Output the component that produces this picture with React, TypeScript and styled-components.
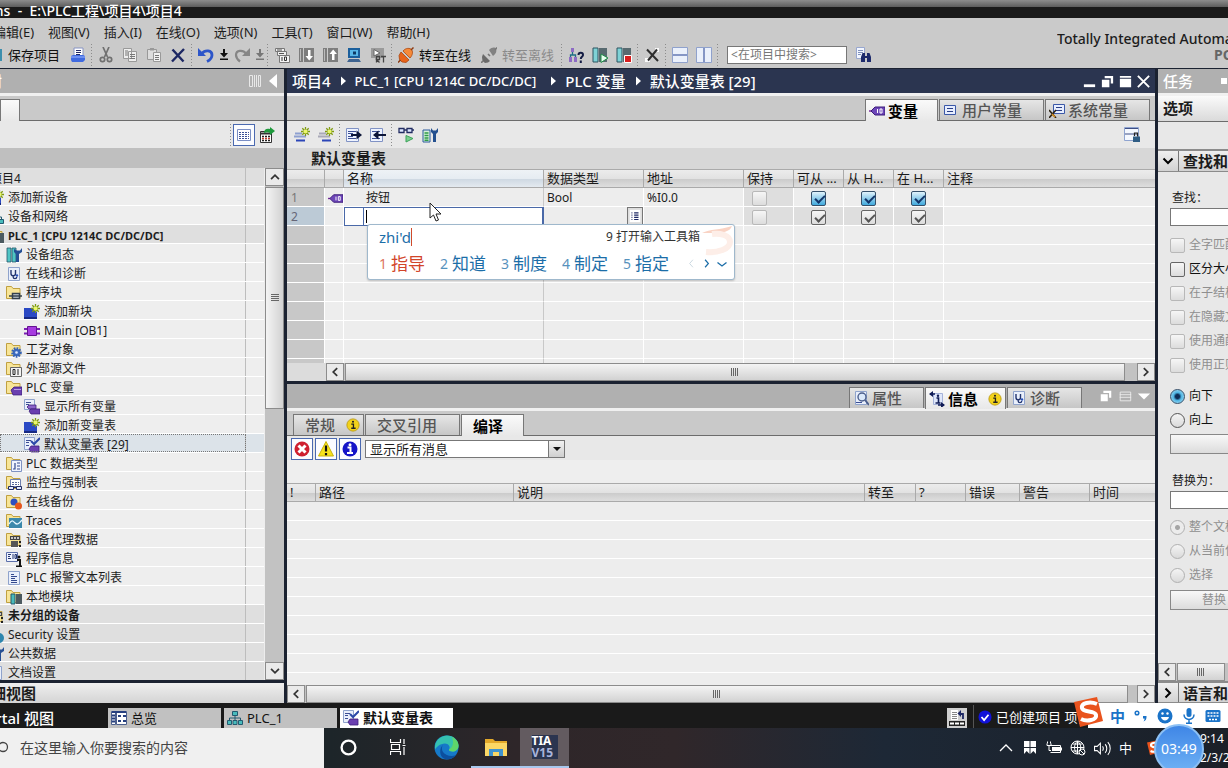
import React from 'react';
import styled, { createGlobalStyle, css } from 'styled-components';

const Global = createGlobalStyle`
  * { box-sizing: border-box; }
  html, body, #root { height: 100%; }
  body {
    margin: 0;
    overflow: hidden;
    background: #1a1a1a;
    color: #1c1c1c;
    font: 12px/18px "Noto Sans", "Noto Sans CJK SC", sans-serif;
  }
  button, input, select { font: inherit; color: inherit; margin: 0; padding: 0; border-radius: 0; }
  ul { list-style: none; margin: 0; padding: 0; }
  p, h1, h2, h3 { margin: 0; font-size: inherit; font-weight: inherit; }
`;

/* ---------- icons ---------- */

const Folder = () => (
  <path d="M.5 13.500V1.500h5l1.500 2h7v10z" fill="#f8e597" stroke="#c0a040" />
);
const Sheet = () => (
  <path d="M2.500 1.500h11v13h-11z" fill="#e9effb" stroke="#8fa3cc" />
);
const Spark = () => (
  <>
    <path d="M11.500 0v9M7 4.500h9M8.300 1.300l6.400 6.400M14.700 1.300L8.300 7.700" stroke="#7f9a12" strokeWidth="1.300" />
    <circle cx="11.500" cy="4.500" r="2" fill="#eaf76a" />
  </>
);
const Tag = () => (
  <>
    <path d="M5 10l3-3h8v8H7z" fill="#6a3fb0" stroke="#3d1f7c" strokeWidth=".8" />
    <path d="M8 9.500h7" stroke="#b9a0e6" />
  </>
);

const icons: Record<string, React.ReactNode> = {
  save: <path d="M1 2h14v12H1z" fill="#3d8fae" />,
  print: (
    <>
      <path d="M4 1h9v8H4z" fill="#fff" stroke="#8794c4" />
      <path d="M6 3.500h5M6 5.500h5M6 7.500h4" stroke="#222a66" />
      <path d="M1 9l2-1h10l2 1v4l-2 2H2l-1-2z" fill="#3f6ae0" />
      <path d="M1 10h14" stroke="#9db5ff" />
    </>
  ),
  cut: (
    <g fill="none" stroke="#707070" strokeWidth="1.700">
      <path d="M5 0l4.500 10M11 0L6.500 10" />
      <circle cx="4.500" cy="12.500" r="2.200" />
      <circle cx="11.500" cy="12.500" r="2.200" />
    </g>
  ),
  copy: (
    <>
      <path d="M1.500 1.500h8v10h-8zM6.500 4.500h8v10h-8z" fill="#eee" stroke="#999" />
      <path d="M3 4h3M3 6h3M3 8h3M8 7.500h5M8 9.500h5M8 11.500h5" stroke="#777" />
    </>
  ),
  paste: (
    <>
      <path d="M1.500 2.500h9v10h-9z" fill="#ddd" stroke="#999" />
      <path d="M4 1h4v2.500H4z" fill="#999" />
      <path d="M7.500 5.500h7v9h-7z" fill="#f2f2f2" stroke="#999" />
      <path d="M9 8.500h4M9 10.500h4M9 12.500h4" stroke="#777" />
    </>
  ),
  remove: <path d="M2.500 2.500l11 12M14 2L2 14.500" stroke="#1c2763" strokeWidth="2.400" />,
  undo: (
    <>
      <path d="M0 1v8h8z" fill="#2c55c9" />
      <path d="M4 6.500c3-4 10-3.500 10 1.500 0 3-2 5-5 6.500" fill="none" stroke="#2c55c9" strokeWidth="2.800" />
    </>
  ),
  redo: (
    <>
      <path d="M16 1v8H8z" fill="#868686" />
      <path d="M12 6.500C9 2.500 2 3 2 8c0 3 2 5 4 6.500" fill="none" stroke="#868686" strokeWidth="2.200" />
    </>
  ),
  compile: (
    <>
      <path d="M1.500 1.500h9v3h-9zM3.500 4.500h9v4h-9z" fill="#eee" stroke="#777" />
      <path d="M3 3h5M5 6.500h5" stroke="#555" />
      <path d="M5.500 8.500h10v7h-10z" fill="#f4f4f4" stroke="#777" />
      <path d="M8 10v4M10.500 10h2v3.500h-2z" fill="none" stroke="#333" />
    </>
  ),
  download: (
    <>
      <path d="M1 1h4v14H1zM6 1h10v14H6z" fill="#7d7d7d" />
      <path d="M2.500 2v12" stroke="#bbb" />
      <path d="M10 3v6H7.500l3.700 4.500L15 9h-2.500V3z" fill="#fff" />
    </>
  ),
  upload: (
    <>
      <path d="M1 1h4v14H1zM6 1h10v14H6z" fill="#7d7d7d" />
      <path d="M2.500 2v12" stroke="#bbb" />
      <path d="M10 13V7H7.500l3.700-4.500L15 7h-2.500v6z" fill="#fff" />
    </>
  ),
  simulate: (
    <>
      <path d="M2 1h12v10H2z" fill="#1b5f9c" />
      <path d="M4 3h8v6H4z" fill="#58b7e8" />
      <path d="M7 4.500h3v3H7z" fill="#0e3b66" />
      <path d="M3 12h10l2 3H1z" fill="#3e6390" />
    </>
  ),
  runtime: (
    <>
      <path d="M1 1h13v10H1z" fill="#9a9a9a" />
      <path d="M4 2.500l6 3.500L4 9z" fill="#fff" stroke="#666" />
      <path d="M6.500 15.500v-6h3v3h-3l3 3M11 9.500h5M13.500 9.500v6" fill="none" stroke="#444" strokeWidth="1.300" />
    </>
  ),
  online: (
    <>
      <path d="M3 5l8 8-3 2.500-4-.5-2.500-2.500L1 8.500z" fill="#e8641b" stroke="#a33c06" strokeWidth=".7" />
      <path d="M5 4c3-3.500 7-3 8.500-1.500S15 8 12 11z" fill="#f58a3a" stroke="#a33c06" strokeWidth=".7" />
      <path d="M2.500 13L0 15.500M13 3l2.500-2.500" stroke="#8d3b12" strokeWidth="1.500" />
    </>
  ),
  offline: (
    <>
      <path d="M2 7l7 7-2 1.500-3 .5-2.500-2L1 10z" fill="#6a6a6a" />
      <path d="M8 3c3-3 6-3 7-1s0 5-3 7z" fill="#828282" />
      <path d="M2 14L0 16M14 3l2-2.500M7 7l2 2" stroke="#777" strokeWidth="1.600" />
    </>
  ),
  accessible: (
    <>
      <path d="M3 1h3v4H3zM1 10h3v5H1zM6 10h3v5H6z" fill="#8d6bc4" />
      <path d="M4.500 5v3M2.500 10V8h5v2" fill="none" stroke="#1f6f86" strokeWidth="1.300" />
      <path d="M10.500 8c0-3 4.500-3 4.500 0 0 2-2.200 1.700-2.200 4M12.800 13.500V16" fill="none" stroke="#141c44" strokeWidth="2" />
    </>
  ),
  startCpu: (
    <>
      <path d="M1 1h5v14H1z" fill="#7fd2d6" stroke="#2c5560" />
      <path d="M7 1h8v14H7z" fill="#586a70" />
      <path d="M9 7l7 4-7 4.500z" fill="#e8fff0" stroke="#1f8c46" />
    </>
  ),
  stopCpu: (
    <>
      <path d="M1 1h5v14H1z" fill="#7fd2d6" stroke="#2c5560" />
      <path d="M7 1h8v14H7z" fill="#586a70" />
      <path d="M8.500 8.500h7v7h-7z" fill="#d81e1e" stroke="#fff" />
    </>
  ),
  crossRef: (
    <>
      <path d="M1 11h5v4H1zM11 1h4v4h-4z" fill="#fafafa" />
      <path d="M3 2.500l11 11.500M13 2.500L4 13.500" stroke="#2e2e2e" strokeWidth="2" />
    </>
  ),
  splitH: (
    <>
      <path d="M.5.500h15v15H.5z" fill="#eaf0fb" stroke="#8fa1cc" />
      <path d="M1 8h14" stroke="#6378b3" strokeWidth="1.500" />
    </>
  ),
  splitV: (
    <>
      <path d="M.5.500h15v15H.5z" fill="#eaf0fb" stroke="#8fa1cc" />
      <path d="M8 1v14" stroke="#6378b3" strokeWidth="1.500" />
    </>
  ),
  find: (
    <>
      <path d="M.5.500h8v11h-8z" fill="#f2f6ff" stroke="#98a7cf" />
      <path d="M2 3.500h5M2 5.500h5M2 7.500h3" stroke="#8090bb" />
      <path d="M5 15v-5l1.500-4H9v3h2V6h2.500L15 10v5h-4v-4H9v4z" fill="#1d2a6b" />
    </>
  ),
  table: (
    <>
      <path d="M1.500 2.500h13v11h-13z" fill="#fff" stroke="#7a8ec4" />
      <path d="M3 5.500h10M3 7.500h10M3 9.500h10M3 11.500h10" stroke="#3d5296" strokeDasharray="2 1" />
    </>
  ),
  exportList: (
    <>
      <path d="M1.500 4.500h11v11h-11z" fill="#fff" stroke="#333" />
      <path d="M2 6.500h10" stroke="#333" strokeWidth="2" />
      <path d="M3 9.500h8M3 13.500h8" stroke="#222" strokeDasharray="2 1" strokeWidth="1.500" />
      <path d="M3 11.500h8" stroke="#c0392b" strokeDasharray="2 1" strokeWidth="1.500" />
      <path d="M5 6c0-4 3-5 6-4V0l5 4-5 4V6c-2-1-3-1-6 0z" fill="#1f9a3c" />
    </>
  ),
  addRow: (
    <>
      <path d="M1 6.500h7M0 9.500h12" stroke="#8ea0d0" strokeWidth="2" />
      <path d="M2 13.500h9" stroke="#2c46b8" strokeWidth="2" />
      <Spark />
    </>
  ),
  insertRow: (
    <>
      <path d="M1 6.500h7M0 9.500h12" stroke="#a9a9b8" strokeWidth="2" />
      <path d="M4 13.500h9" stroke="#2c46b8" strokeWidth="2" />
      <Spark />
    </>
  ),
  exportPage: (
    <>
      <path d="M.5 1.500h12v13H.5z" fill="#eef3ff" stroke="#8092c4" />
      <path d="M2 4.500h8M2 6.500h5M2 9.500h5M2 11.500h8" stroke="#3c4f94" />
      <path d="M5 8h6" stroke="#0c1538" strokeWidth="2" />
      <path d="M10.500 3.500L16 8l-5.500 4.500z" fill="#0c1538" />
    </>
  ),
  importPage: (
    <>
      <path d="M.5 1.500h12v13H.5z" fill="#eef3ff" stroke="#8092c4" />
      <path d="M2 4.500h8M2 11.500h8" stroke="#3c4f94" />
      <path d="M8 8h8" stroke="#0c1538" strokeWidth="2" />
      <path d="M8.500 3.500L3 8l5.500 4.500z" fill="#0c1538" />
    </>
  ),
  monitor: (
    <>
      <path d="M1 1.500h5v4H1zM9 1.500h5v4H9zM6 3h3M14 3h2" fill="#dfe8ff" stroke="#232d62" strokeWidth="1.300" />
      <path d="M8 8.500l7 3-7 3.500z" fill="#7bd08f" stroke="#3da35a" />
    </>
  ),
  wrench: (
    <>
      <path d="M1 3h7v12H1z" fill="#d7f0da" stroke="#2c5a9e" />
      <path d="M2.500 6h4M2.500 8.500h4M2.500 11h4M2.500 13.200h4" stroke="#2f9b48" strokeWidth="1.400" />
      <path d="M9 1v4l2 2v8h3V7l2-2V1l-2 2.500h-3z" fill="#24508f" />
    </>
  ),
  layout: (
    <>
      <path d="M.5.500h14v13H.5z" fill="#f4f8ff" stroke="#8fa4d0" />
      <path d="M1 1.500h13M1 7h13" stroke="#3f4f85" />
      <path d="M9 9.500h7V15H9z" fill="#2f5d84" />
      <path d="M10.500 9V6h3v3.500" fill="none" stroke="#222" strokeWidth="1.200" />
    </>
  ),
  tag: (
    <>
      <path d="M0 8h3" stroke="#7a2d9c" strokeWidth="1.500" />
      <path d="M2 8l4-4h10v8H6z" fill="#6d46b8" stroke="#3c1d7a" />
      <path d="M8.500 6v4M11 6h2v4h-2z" fill="none" stroke="#fff" />
    </>
  ),
  constant: (
    <>
      <path d="M1.500 3.500h11v9h-11z" fill="#e7eeff" stroke="#3b58a8" />
      <path d="M4 6.500h6M4 9.500h6" stroke="#2b3f86" />
    </>
  ),
  sysConstant: (
    <>
      <path d="M4.500 2.500h11v9h-11z" fill="#e7eeff" stroke="#3b58a8" />
      <path d="M7 5.500h6M7 8.500h6" stroke="#2b3f86" />
      <path d="M0 8l7 8M7 8l-7 8" stroke="#2a2013" strokeWidth="1.500" />
      <path d="M3 12l3 3" stroke="#d98e1c" strokeWidth="1.500" />
    </>
  ),
  device: (
    <>
      <path d="M1 1h4v14H1zM6 1h4v14H6z" fill="#4fc4c4" stroke="#24566a" strokeWidth=".8" />
      <path d="M8 2v3l2 2v8h3V7l3-2V1l-2 2.500h-3z" fill="#254f94" />
    </>
  ),
  diagnose: (
    <>
      <Sheet />
      <path d="M5 4v3.500c0 3 4.500 3 4.500 0V4M7.200 9.500V11c0 2.200 3.500 2.200 3.500 0" fill="none" stroke="#23356f" strokeWidth="1.400" />
      <circle cx="11" cy="9.500" r="1.200" fill="#2950b8" />
    </>
  ),
  blocks: (
    <>
      <Folder />
      <path d="M3 11h13M6.500 8.500h7v5h-7z" fill="#cdd6de" stroke="#34414e" strokeWidth="1.500" />
    </>
  ),
  addBlock: (
    <>
      <path d="M0 4h9l4 4v7H0z" fill="#2a49c4" />
      <path d="M0 14h13" stroke="#172a82" strokeWidth="2" />
      <Spark />
    </>
  ),
  ob: (
    <>
      <path d="M0 6h16M0 10.500h16" stroke="#7a1fb3" strokeWidth="2" />
      <path d="M3.500 3.500h9v9h-9z" fill="#a73be0" stroke="#63138f" />
    </>
  ),
  objects: (
    <>
      <Folder />
      <circle cx="10.500" cy="10.500" r="3.800" fill="#3f6fc4" stroke="#3562b4" strokeDasharray="1.500 1" strokeWidth="3" />
      <circle cx="10.500" cy="10.500" r="1.300" fill="#dfe9ff" />
    </>
  ),
  external: (
    <>
      <Folder />
      <path d="M4.500 6.500h11v9h-11z" fill="#f4f4f4" stroke="#666" />
      <path d="M7 8.500h2v5H7zM12 8v6" fill="none" stroke="#222" />
    </>
  ),
  tags: (
    <>
      <Folder />
      <Tag />
    </>
  ),
  allTags: (
    <>
      <path d="M.5.500h10v10H.5z" fill="#e9effb" stroke="#8fa3cc" />
      <path d="M2 3.500h5M2 5.500h3" stroke="#3c4f94" />
      <path d="M3 8l2-2h7v4H5z" fill="#8a63c9" stroke="#3d1f7c" strokeWidth=".8" />
      <path d="M5 12l2-2h9v5H7z" fill="#6a3fb0" stroke="#3d1f7c" strokeWidth=".8" />
    </>
  ),
  tagTable: (
    <>
      <path d="M.5.500h10v12H.5z" fill="#e9effb" stroke="#8fa3cc" />
      <path d="M2 3.500h5M2 5.500h3M2 8.500h3" stroke="#3c4f94" />
      <path d="M7 4l3 3 6-6" fill="none" stroke="#2c49a8" strokeWidth="2" />
      <path d="M5 12l2-3h8v6H7z" fill="#6a3fb0" stroke="#3d1f7c" strokeWidth=".8" />
    </>
  ),
  types: (
    <>
      <Folder />
      <path d="M5.500 4.500h10v11h-10z" fill="#f0f4ff" stroke="#7e92c2" />
      <path d="M9 7v6H7M11 7h3M11 10h3M11 13h3" fill="none" stroke="#33488e" strokeWidth="1.200" />
    </>
  ),
  watch: (
    <>
      <Folder />
      <path d="M4.500 4.500h10v7h-10z" fill="#fff" stroke="#6f80b0" />
      <path d="M6 7.500h7M6 9.500h7" stroke="#5a6a9c" strokeDasharray="2 1" />
      <path d="M2.500 11.500h5v3h-5zM10.500 11.500h5v3h-5zM7 12.500h4" fill="#dfe8ff" stroke="#232d62" />
    </>
  ),
  backup: (
    <>
      <Folder />
      <circle cx="8" cy="8" r="3.500" fill="#2d50c0" />
      <circle cx="12.500" cy="12" r="3.500" fill="#e6571d" />
    </>
  ),
  traces: (
    <>
      <Folder />
      <path d="M3 5h13v10H3z" fill="#3b88ab" />
      <path d="M3 11c3-5 4-3 6-1s4 1 7-3" fill="none" stroke="#e6f7ff" strokeWidth="1.300" />
    </>
  ),
  proxy: (
    <>
      <Folder />
      <path d="M4 4h10v4H4z" fill="#444" />
      <path d="M5 6h8" stroke="#f2f2f2" strokeDasharray="2 1" strokeWidth="1.500" />
      <path d="M5 9h7v6H5z" fill="#565656" />
      <path d="M14 9v2M14 13v2" stroke="#222" strokeWidth="2" />
    </>
  ),
  info: (
    <>
      <path d="M.5 1.500h11v9H.5z" fill="#f0f4ff" stroke="#5c70ab" />
      <path d="M2 3.500h3M2 5.500h2M2 7.500h3M7 3v5M9 3.500h1.500v4H9z" fill="none" stroke="#23356f" />
      <path d="M11 9h3v6M10 15.500h6" fill="none" stroke="#111" strokeWidth="2" />
      <circle cx="13" cy="6" r="1.500" fill="#111" />
    </>
  ),
  textList: (
    <>
      <Sheet />
      <path d="M5 4.500h3M5 6.500h6M5 8.500h4M5 10.500h6M5 12.500h6" stroke="#33488e" />
    </>
  ),
  modules: (
    <>
      <Folder />
      <path d="M5 5h4v10H5z" fill="#49bcbc" stroke="#24566a" />
      <path d="M10 5h6v10h-6z" fill="#4c5a60" />
    </>
  ),
  security: (
    <>
      <circle cx="8" cy="5" r="4" fill="#d9c25a" />
      <circle cx="11" cy="11" r="5" fill="#2e86ae" />
    </>
  ),
  property: (
    <>
      <Sheet />
      <circle cx="9" cy="7" r="4" fill="#dbe9fb" stroke="#4b5e8c" strokeWidth="1.400" />
      <path d="M12 10l4 5" stroke="#4b5e8c" strokeWidth="2" />
      <path d="M3 12.500h6" stroke="#3c4f94" />
    </>
  ),
  infoTab: (
    <>
      <path d="M4.500 2.500h9v11h-9z" fill="#dfe7fa" stroke="#a5b3da" />
      <path d="M1 3h5M9 14h6" stroke="#101c56" strokeWidth="1.500" />
      <path d="M4 0L0 3l4 3zM12 11l4 3-4 3z" fill="#101c56" />
      <path d="M7.500 7h2v5M6.500 12h5" fill="none" stroke="#101c56" strokeWidth="1.600" />
      <circle cx="9" cy="4.700" r="1.200" fill="#101c56" />
    </>
  ),
  infoYellow: (
    <>
      <circle cx="8" cy="8" r="7" fill="#f2d21b" stroke="#bd9c10" />
      <path d="M6 7h2.500v4.500M6 11.700h5" fill="none" stroke="#222" strokeWidth="1.500" />
      <circle cx="8" cy="4.300" r="1.200" fill="#222" />
    </>
  ),
  error: (
    <>
      <circle cx="8" cy="8" r="7.500" fill="#cf2030" />
      <path d="M4.500 4.500l7 7M11.500 4.500l-7 7" stroke="#fff" strokeWidth="3" />
    </>
  ),
  warning: (
    <>
      <path d="M8 .5L15.500 15H.5z" fill="#f6e21c" stroke="#c9b30f" />
      <path d="M8 4.500v6M8 12v2.200" stroke="#111" strokeWidth="2.200" />
    </>
  ),
  message: (
    <>
      <circle cx="8" cy="8" r="7.500" fill="#1414c8" />
      <path d="M5.500 6.500h3v5M5 12h6" fill="none" stroke="#fff" strokeWidth="2" />
      <circle cx="8" cy="3.700" r="1.500" fill="#fff" />
    </>
  ),
  overview: (
    <>
      <path d="M.5 1.500h4v13h-4zM5.500 1.500h10v13h-10z" fill="#fff" stroke="#4b5e8c" />
      <path d="M1 2h14" stroke="#27407f" strokeWidth="2" />
      <path d="M1 5.500h3M1 8.500h3M1 11.500h3M7 6h3M12 6h3M7 11h3M12 11h3" stroke="#27407f" strokeWidth="2" />
    </>
  ),
  network: (
    <>
      <path d="M5.500 1.500h5v4h-5zM.5 10.500h4v4h-4zM6 10.500h4v4H6zM11.500 10.500h4v4h-4z" fill="#49bcbc" stroke="#235a70" />
      <path d="M8 5.500v5M2.500 10.500V8h11v2.500" fill="none" stroke="#235a70" />
    </>
  ),
  dock: (
    <>
      <path d="M2 0h7v10H2z" fill="#fff" />
      <path d="M3 2.500h5M3 4.500h5M3 6.500h5M3 8.500h5" stroke="#888" />
      <path d="M10 4h4v5" fill="none" stroke="#1d2763" strokeWidth="1.800" />
      <path d="M12 0v7L8.500 3.500z" fill="#1d2763" />
      <path d="M0 11h16v5H0z" fill="#222" />
      <path d="M1 13.500h14" stroke="#fff" strokeWidth="2" strokeDasharray="4 1" />
    </>
  ),
  ok: (
    <>
      <circle cx="8" cy="8" r="7.500" fill="#1212d8" />
      <path d="M4 8l3 3.500 5-6" fill="none" stroke="#fff" strokeWidth="2" />
    </>
  ),
  columns: <path d="M2.500 2.500h3v11h-3zM7.500 2v12M9.500 2v12M11.500 2.500h2v11h-2z" fill="none" stroke="#e8e8e8" />,
  left: <path d="M12 1v14L4 8z" fill="#fff" />,
  min: <path d="M2 11h12v3H2z" fill="#fff" />,
  restore: <path d="M2 6h8v8H2zM5 2h9v8h-2.500V4.500H5z" fill="#fff" />,
  max: <path d="M2 2h12v2H2zM2 5h12v9H2z" fill="#fff" />,
  close: <path d="M2 2l12 12M14 2L2 14" stroke="#fff" strokeWidth="2" />,
  rows: <path d="M2.500 3.500h12v10h-12zM2 6.500h13M2 9.500h13" fill="none" stroke="#eee" />,
  down: <path d="M1 5h14l-7 7z" fill="#fff" />,
  pane: <path d="M2 2h12v12H2z" fill="#fff" />,
  list: (
    <>
      <path d="M2 1h12v14H2z" fill="#fff" />
      <path d="M4 4.500h1M7 4.500h5M4 7h1M7 7h5M4 9.500h1M7 9.500h5M4 12h1M7 12h5" stroke="#1d2763" strokeWidth="1.400" />
    </>
  ),
  chevL: <path d="M10.500 3.500L6 8l4.500 4.500" fill="none" stroke="currentColor" strokeWidth="2" />,
  chevR: <path d="M5.500 3.500L10 8l-4.500 4.500" fill="none" stroke="currentColor" strokeWidth="2" />,
  chevU: <path d="M3.500 10.500L8 6l4.500 4.500" fill="none" stroke="currentColor" strokeWidth="2" />,
  chevD: <path d="M3.500 5.500L8 10l4.500-4.500" fill="none" stroke="currentColor" strokeWidth="2" />,
  thinL: <path d="M9.500 4L6 8l3.500 4" fill="none" stroke="currentColor" />,
  thinR: <path d="M6.500 4L10 8l-3.500 4" fill="none" stroke="currentColor" strokeWidth="1.300" />,
  thinD: <path d="M3.500 6.500L8 10l4.500-3.500" fill="none" stroke="currentColor" strokeWidth="1.300" />,
  thinU: <path d="M2 11l6-6 6 6" fill="none" stroke="#fff" strokeWidth="1.300" />,
  caret: <path d="M7 2h2v4h3L8 10.500 4 6h3zM4 11.500h8V13H4z" fill="currentColor" />,
  crumb: <path d="M6 3.500v9l5-4.500z" fill="#fff" />,
  bookmark: <path d="M2 1h5.500v6H2zM8.500 1H14v6H8.500zM2 8h5.500v6L4.700 11 2 14zM8.500 8H14v6l-2.700-3-2.800 3z" fill="#fff" />,
  battery: (
    <>
      <path d="M6 7h8v4H6z" fill="#fff" />
      <path d="M4.500 5.500h10v7h-10M15.500 7.500v3M1 3.500v2h4v-2M3 5.500v5h2M1.500 1.500v2M4.500 1.500v2" fill="none" stroke="#fff" />
    </>
  ),
  globe: (
    <g fill="none" stroke="#fff">
      <circle cx="7.500" cy="7.500" r="6.500" />
      <path d="M1 7.500h13M7.500 1v13M2.500 4h10M2.500 11h6M7.500 1C3.500 5 3.500 10 7.500 14M7.500 1c3 3 3.500 5 3 8" />
      <circle cx="12" cy="12" r="3" fill="#1c2530" />
      <path d="M10 10l4 4" />
    </g>
  ),
  speaker: (
    <path d="M.5 6H3l3-3v10l-3-3H.5zM8 6c1 1 1 3 0 4M10.500 4c2 2 2 6 0 8M13 2c3 3 3 9 0 12" fill="none" stroke="#fff" />
  ),
  cortana: <circle cx="8" cy="8" r="6.500" fill="none" stroke="#fff" strokeWidth="2.200" />,
  taskView: (
    <path d="M.5 0v3.500h10V0M1.500 5.500h8v5h-8zM.5 16v-3.500h10V16M14 0v5M14 8v8M12.500 6.500h3" fill="none" stroke="#fff" strokeWidth="1.200" />
  ),
  punct: (
    <>
      <circle cx="4" cy="5" r="1.800" fill="none" stroke="#1a73c8" strokeWidth="1.500" />
      <path d="M10 8h3.500c.3 3-1 5-3 5.500 1-1.500 1-2 1-3H10z" fill="#1a73c8" />
    </>
  ),
  smile: (
    <>
      <circle cx="8" cy="8" r="7.500" fill="#1a73c8" />
      <circle cx="5.500" cy="5.500" r="1.200" fill="#fff" />
      <circle cx="10.500" cy="5.500" r="1.200" fill="#fff" />
      <path d="M4 9h8c-1 4.500-7 4.500-8 0z" fill="#fff" />
    </>
  ),
  mic: (
    <>
      <rect x="5.500" y="0" width="5" height="9" rx="2.500" fill="#1a73c8" />
      <path d="M3 6.500c0 6.500 10 6.500 10 0M8 11.500V15M5 15.200h6" fill="none" stroke="#1a73c8" strokeWidth="1.500" />
    </>
  ),
  keyboard: (
    <>
      <rect x=".5" y="2" width="15" height="12" rx="1.500" fill="#1a73c8" />
      <path d="M2.500 5h11M2.500 8h11M4 11.500h8" stroke="#fff" strokeWidth="1.500" strokeDasharray="2 1" />
    </>
  ),
};

const Svg = styled.svg`
  flex: none;
  display: block;
`;
const Icon = ({ name, size = 16 }: { name: string; size?: number }) => (
  <Svg width={size} height={size} viewBox="0 0 16 16" fill="none" aria-hidden="true">
    {icons[name]}
  </Svg>
);

/* ---------- frame ---------- */

const Shell = styled.div`
  height: 100vh;
  display: flex;
  flex-direction: column;
  overflow: hidden;
`;

const TitleBar = styled.header`
  flex: none;
  height: 18px;
  padding-top: 3px;
  overflow: hidden;
  background: linear-gradient(#8c8c8c, #5c5c5c 7px, #1a1a1a 7px);
  color: #fff;
  font-size: 14px;
  font-weight: 500;
  line-height: 16px;
  white-space: nowrap;
`;
const ClippedText = styled.h1<{ $shift: number }>`
  margin-left: ${(p) => -p.$shift}px;
  white-space: pre;
  font-weight: inherit;
`;

const CommandArea = styled.div`
  flex: none;
  display: flex;
  justify-content: space-between;
  height: 51px;
  overflow: hidden;
  background: #cacaca;
  border-bottom: 1px solid #1b2231;
  white-space: nowrap;
`;
const MenuBar = styled.nav`
  display: flex;
  gap: 14px;
  height: 25px;
  padding-top: 3px;
  margin-left: -7px;
`;
const MenuItem = styled.button`
  border: 0;
  background: none;
  font-size: 13px;
  line-height: 20px;
`;
const Toolbar = styled.div`
  display: flex;
  align-items: center;
  height: 24px;
`;
const ToolButton = styled.button<{ $narrow?: boolean; $muted?: boolean }>`
  flex: none;
  display: flex;
  align-items: center;
  justify-content: center;
  width: ${(p) => (p.$narrow ? 12 : 24)}px;
  height: 24px;
  border: 0;
  background: none;
  color: ${(p) => (p.$muted ? '#777' : '#111')};
  overflow: hidden;
`;
const TextButton = styled.button<{ $muted?: boolean; $lead?: boolean }>`
  flex: none;
  display: flex;
  align-items: center;
  gap: 5px;
  height: 24px;
  padding: 0 6px 0 4px;
  border: 0;
  background: none;
  font-size: 13px;
  color: ${(p) => (p.$muted ? '#8a8a8a' : '#111')};
  ${(p) => p.$lead && css`margin-left: -17px;`}
`;
const Sep = styled.span`
  flex: none;
  width: 4px;
  height: 22px;
  background: repeating-linear-gradient(#8c8c8c 0 1px, transparent 1px 3px) 1px 0 / 1px 100% no-repeat;
`;
const Search = styled.input`
  width: 120px;
  height: 18px;
  margin: 0 5px 0 7px;
  padding: 0 3px;
  border: 1px solid #777;
  background: #fff;
  font-size: 12px;
  &::placeholder { color: #777; opacity: 1; }
`;
const Brand = styled.div`
  flex: none;
  width: 171px;
  padding-top: 13px;
  overflow: hidden;
  font-size: 14px;
  font-weight: 500;
  line-height: 16px;
`;
const BrandSub = styled.div`
  padding-left: 157px;
  color: #666;
  font-weight: 700;
`;

const Workspace = styled.main`
  flex: 1;
  min-height: 0;
  display: flex;
  gap: 3px;
  background: #1b2231;
`;

/* ---------- shared panel parts ---------- */

const Panel = styled.section<{ $width?: number }>`
  ${(p) => (p.$width ? css`flex: 0 0 ${p.$width}px;` : css`flex: 1; min-width: 0;`)}
  display: flex;
  flex-direction: column;
  overflow: hidden;
  background: #e8e8e8;
  white-space: nowrap;
`;
const PanelHead = styled.div<{ $dark?: boolean }>`
  flex: none;
  display: flex;
  align-items: center;
  gap: 4px;
  height: 27px;
  padding-left: 5px;
  border-bottom: 3px solid #f0f0f0;
  background: ${(p) => (p.$dark ? '#2b3550' : '#b0b0b0')};
  color: #fff;
  font-size: 15px;
  font-weight: 500;
`;
const Spacer = styled.span`
  flex: 1;
`;
const HeadTools = styled.span<{ $end?: number }>`
  display: flex;
  gap: 2px;
  padding-right: ${(p) => p.$end ?? 3}px;
`;
const HeadButton = styled.button`
  border: 0;
  background: none;
  width: 16px;
  height: 16px;
`;
const TabStrip = styled.div<{ $right?: boolean; $flush?: boolean }>`
  flex: none;
  display: flex;
  align-items: flex-end;
  justify-content: ${(p) => (p.$right ? 'flex-end' : 'flex-start')};
  gap: 1px;
  height: 25px;
  padding: 0 ${(p) => (p.$flush ? 0 : p.$right ? 5 : 6)}px;
  background: #c9c9c9;
  border-bottom: 1px solid #6c6c6c;
`;
const Tab = styled.button<{ $active?: boolean; $width: number }>`
  flex: none;
  display: flex;
  align-items: center;
  justify-content: flex-start;
  gap: 3px;
  width: ${(p) => p.$width}px;
  height: 21px;
  padding: 0 3px;
  border: 1px solid #777;
  border-bottom: 0;
  background: linear-gradient(#e6e6e6, #c6c6c6);
  color: #555;
  font-size: 15px;
  font-weight: 500;
  line-height: 20px;
  ${(p) => p.$active && css`
    height: 22px;
    margin-bottom: -1px;
    background: linear-gradient(#fafafa, #e8e8e8);
    color: #000;
    font-weight: 700;
  `}
`;
const TabText = styled.span<{ $pad?: number }>`
  padding-left: ${(p) => p.$pad || 0}px;
`;
const IconBar = styled.div<{ $right?: boolean }>`
  flex: none;
  display: flex;
  align-items: center;
  height: 27px;
  padding: 0 ${(p) => (p.$right ? 5 : 3)}px;
  justify-content: ${(p) => (p.$right ? 'flex-end' : 'flex-start')};
`;
const FramedButton = styled.button`
  display: flex;
  align-items: center;
  justify-content: center;
  width: 22px;
  height: 22px;
  border: 1px solid #4a69b0;
  background: #fbfcff;
`;

/* ---------- scroll bars ---------- */

const ScrollRow = styled.div<{ $inset?: number }>`
  flex: none;
  display: flex;
  gap: 1px;
  height: 18px;
  padding-left: ${(p) => p.$inset || 0}px;
  background: linear-gradient(90deg, #dcdcdc ${(p) => p.$inset || 0}px, #c2c2c2 ${(p) => p.$inset || 0}px);
`;
const ScrollColumn = styled.div`
  flex: 0 0 19px;
  display: flex;
  flex-direction: column;
  gap: 1px;
  background: #c2c2c2;
`;
const ScrollButton = styled.button`
  flex: 0 0 18px;
  display: flex;
  align-items: center;
  justify-content: center;
  border: 1px solid #8c8c8c;
  background: #eaeaea;
  color: #333;
`;
const Thumb = styled.div<{ $vertical?: boolean; $gap?: number }>`
  flex: 1;
  display: flex;
  align-items: center;
  justify-content: center;
  margin-right: ${(p) => p.$gap || 0}px;
  border: 1px solid #8c8c8c;
  background: linear-gradient(${(p) => (p.$vertical ? '90deg, ' : '')}#f4f4f4, #d2d2d2);
  ${(p) => p.$vertical && css`flex: 0 0 222px;`}
`;
const Grip = styled.span<{ $vertical?: boolean }>`
  width: 8px;
  height: 8px;
  background: repeating-linear-gradient(${(p) => (p.$vertical ? '180deg' : '90deg')}, #666 0 1px, transparent 1px 2px);
`;
const HScroll = ({ inset, gap }: { inset?: number; gap: number }) => (
  <ScrollRow $inset={inset}>
    <ScrollButton aria-label="向左滚动"><Icon name="chevL" size={14} /></ScrollButton>
    <Thumb $gap={gap}><Grip /></Thumb>
    <ScrollButton aria-label="向右滚动"><Icon name="chevR" size={14} /></ScrollButton>
  </ScrollRow>
);

/* ---------- project tree ---------- */

const TreeHeader = styled.div`
  flex: none;
  height: 20px;
  background: #bfbfbf;
`;
const TreeArea = styled.div`
  flex: 1;
  min-height: 0;
  display: flex;
  overflow: hidden;
  background: #ededed;
`;
const Tree = styled.ul`
  flex: 1;
  min-width: 0;
  padding-right: 1px;
`;
const TreeRow = styled.li<{ $tone?: string }>`
  display: flex;
  height: 19px;
  border-bottom: 1px solid #fff;
  background: ${(p) => (p.$tone === 'dark' ? '#dfdfdf' : p.$tone === 'selected' ? '#dce3e9' : '#eee')};
`;
const TreeName = styled.div<{ $level: number; $bold?: boolean; $selected?: boolean }>`
  flex: 1;
  display: flex;
  align-items: center;
  gap: 4px;
  padding-top: 3px;
  padding-left: ${(p) => Math.max(0, p.$level * 18 - 30)}px;
  margin-left: ${(p) => Math.min(0, p.$level * 18 - 30)}px;
  border-right: 1px solid #bdbdbd;
  font-weight: ${(p) => (p.$bold ? 700 : 400)};
  line-height: 18px;
  ${(p) => p.$selected && css`outline: 1px dotted #777; outline-offset: -1px;`}
`;
const Model = styled.span`
  font-size: 11px;
`;
const TreeSide = styled.div`
  flex: 0 0 18px;
`;
const DetailHead = styled.div`
  flex: none;
  height: 23px;
  border-top: 3px solid #1b2231;
  background: linear-gradient(#efefef, #d4d4d4);
  font-size: 15px;
  font-weight: 700;
  line-height: 20px;
`;

type Node = [level: number, icon: string, label: React.ReactNode, tone?: string, bold?: boolean];
const nodes: Node[] = [
  [0, 'save', '项目4', 'dark'],
  [1, 'addBlock', '添加新设备'],
  [1, 'network', '设备和网络'],
  [1, 'modules', <Model>PLC_1 [CPU 1214C DC/DC/DC]</Model>, 'dark', true],
  [2, 'device', '设备组态'],
  [2, 'diagnose', '在线和诊断'],
  [2, 'blocks', '程序块'],
  [3, 'addBlock', '添加新块'],
  [3, 'ob', 'Main [OB1]'],
  [2, 'objects', '工艺对象'],
  [2, 'external', '外部源文件'],
  [2, 'tags', 'PLC 变量'],
  [3, 'allTags', '显示所有变量'],
  [3, 'addBlock', '添加新变量表'],
  [3, 'tagTable', '默认变量表 [29]', 'selected'],
  [2, 'types', 'PLC 数据类型'],
  [2, 'watch', '监控与强制表'],
  [2, 'backup', '在线备份'],
  [2, 'traces', 'Traces'],
  [2, 'proxy', '设备代理数据'],
  [2, 'info', '程序信息'],
  [2, 'textList', 'PLC 报警文本列表'],
  [2, 'modules', '本地模块'],
  [1, 'proxy', '未分组的设备', 'dark', true],
  [1, 'security', 'Security 设置', 'dark'],
  [1, 'device', '公共数据', 'dark'],
  [1, 'textList', '文档设置', 'dark'],
];

/* ---------- tag editor ---------- */

const Crumb = styled.span<{ $model?: boolean }>`
  ${(p) => p.$model && css`padding-right: 5px; font-size: 13px;`}
`;
const Editor = styled.div`
  flex: none;
  position: relative;
  display: flex;
  flex-direction: column;
  background: #ededed;
`;
const TableTitle = styled.h2`
  flex: none;
  height: 21px;
  padding-left: 24px;
  background: #d7d7d7;
  font-size: 15px;
  font-weight: 700;
  line-height: 20px;
`;
const TableView = styled.div<{ $height?: number }>`
  ${(p) => (p.$height ? css`flex: 0 0 ${p.$height}px;` : css`flex: 1; min-height: 0;`)}
  overflow: hidden;
  background: #ededed;
`;
const Grid = styled.table`
  width: 100%;
  table-layout: fixed;
  border-collapse: separate;
  border-spacing: 0;
`;
const Th = styled.th<{ $active?: boolean }>`
  height: 19px;
  padding: 0 0 0 3px;
  overflow: hidden;
  text-align: left;
  font-size: 13px;
  font-weight: 400;
  line-height: 17px;
  border-top: 1px solid #aaa;
  border-bottom: 1px solid #aaa;
  border-right: 1px solid #aaa;
  background: ${(p) =>
    p.$active
      ? 'linear-gradient(#eef2f6, #e6ecf2 50%, #cfd9e3 55%, #e4eaf0)'
      : 'linear-gradient(#ececec, #e2e2e2 50%, #cccccc 55%, #dedede)'};
  &:last-child { border-right: 0; }
`;
const Td = styled.td<{ $kind?: string }>`
  height: 19px;
  padding: 2px 0 0 3px;
  border-bottom: 1px solid #fff;
  border-right: 1px solid #fff;
  line-height: 16px;
  ${(p) => p.$kind === 'num' && css`background: #c8c8c8; color: #777; padding-left: 4px;`}
  ${(p) => p.$kind === 'numActive' && css`background: #bccad6; color: #667; padding-left: 4px;`}
  ${(p) => p.$kind === 'shade' && css`background: #dedede;`}
  ${(p) => p.$kind === 'name' && css`padding-left: 22px; border-right-color: #c8c8c8;`}
  ${(p) => p.$kind === 'edit' && css`padding: 0; border: 0;`}
  ${(p) => p.$kind === 'pick' && css`padding: 0;`}
  &:last-child { border-right: 0; }
`;
const NameInput = styled.input`
  display: block;
  width: 100%;
  height: 19px;
  padding-left: 21px;
  border: 1px solid #4a69a8;
  border-right-width: 2px;
  outline: 0;
  background: linear-gradient(90deg, #fff 18px, #4a69a8 18px, #4a69a8 19px, #fff 19px);
`;
const CellEnd = styled.div`
  display: flex;
  justify-content: flex-end;
`;
const PickButton = styled.button`
  display: flex;
  align-items: center;
  justify-content: center;
  width: 16px;
  height: 18px;
  border: 1px solid #777;
  background: #ddd;
`;
const Check = styled.input.attrs({ type: 'checkbox' })<{ $blue?: boolean; $inset?: number }>`
  appearance: none;
  flex: none;
  display: block;
  position: relative;
  width: 15px;
  height: 15px;
  margin-left: ${(p) => p.$inset || 0}px;
  border: 1px solid #666;
  border-radius: 2px;
  background: linear-gradient(#f6f6f6, #dcdcdc);
  &:disabled { border-color: #b8b8b8; }
  ${(p) => p.$blue && css`border-color: #35506a; background: linear-gradient(#e2f3fb, #3fa9dd);`}
  &:checked::after {
    content: '';
    position: absolute;
    left: 5px;
    top: 1px;
    width: 4px;
    height: 8px;
    border: solid ${(p) => (p.$blue ? '#12356b' : '#555')};
    border-width: 0 2px 2px 0;
    transform: rotate(45deg);
  }
`;
const Caret = styled.i`
  position: absolute;
  left: 79px;
  top: 62px;
  width: 1px;
  height: 13px;
  background: #000;
`;

const widths = [38, 19, 200, 100, 100, 50, 50, 50, 50];
const headings = ['', '', '名称', '数据类型', '地址', '保持', '可从 ...', '从 H...', '在 H...', '注释'];
const flags = ['可从 HMI 访问', '从 HMI 可写', '在 HMI 中可见'];

/* ---------- input-method popup ---------- */

const Ime = styled.div`
  position: absolute;
  left: 80px;
  top: 76px;
  width: 368px;
  height: 56px;
  padding: 3px 6px 0 11px;
  border: 1px solid #9fb8cc;
  border-radius: 3px;
  background: #fff;
  box-shadow: 0 1px 2px rgba(0, 0, 0, 0.2);
  color: #1c6ea8;
`;
const ImeMark = styled.svg`
  position: absolute;
  right: 0;
  top: 0;
`;
const ImeTop = styled.div`
  display: flex;
  justify-content: space-between;
  height: 24px;
  padding-right: 28px;
  color: #333;
  line-height: 18px;
`;
const Typed = styled.span`
  height: 18px;
  border-right: 1px solid #d04a2c;
  color: #1c6ea8;
  font-size: 15px;
`;
const Candidates = styled.div`
  display: flex;
  align-items: center;
  gap: 15px;
`;
const Candidate = styled.button<{ $first?: boolean }>`
  flex: none;
  display: flex;
  width: 46px;
  border: 0;
  background: none;
  color: ${(p) => (p.$first ? '#d2452a' : '#1c6ea8')};
  font-size: 17px;
  line-height: 24px;
`;
const Num = styled.span`
  flex: 0 0 12px;
  text-align: left;
  font-size: 14px;
  opacity: 0.75;
`;
const Pager = styled.span`
  display: flex;
`;
const Faint = styled.span`
  color: #c9d6df;
`;
const Pointer = styled.svg`
  position: absolute;
  left: 142px;
  top: 54px;
`;

/* ---------- inspector ---------- */

const Inspector = styled(Panel)`
  border-top: 3px solid #1b2231;
`;
const InspectorHead = styled(PanelHead)`
  padding-left: 0;
  gap: 1px;
  align-items: flex-end;
`;
const InspectorTools = styled.span`
  display: flex;
  gap: 3px;
  padding: 0 2px 4px 16px;
`;
const FilterBar = styled.div`
  flex: none;
  display: flex;
  align-items: center;
  gap: 2px;
  height: 47px;
  padding: 0 4px 21px;
  background: linear-gradient(#e8e8e8 24px, #eeeeee 24px);
`;
const SelectBox = styled.div`
  position: relative;
  width: 200px;
  margin-left: 2px;
  &::before {
    content: '';
    position: absolute;
    right: 1px;
    top: 1px;
    width: 15px;
    height: 16px;
    border-left: 1px solid #777;
    background: linear-gradient(#f2f2f2, #cfcfcf);
    pointer-events: none;
  }
  &::after {
    content: '';
    position: absolute;
    right: 4px;
    top: 7px;
    border: 4px solid transparent;
    border-top-color: #111;
    pointer-events: none;
  }
`;
const Select = styled.select`
  appearance: none;
  display: block;
  width: 100%;
  height: 18px;
  padding: 0 4px;
  border: 1px solid #777;
  background: #fff;
  font-size: 13px;
  line-height: 16px;
`;
const logWidths = [29, 198, 351, 51, 50, 54, 70];
const logHeads = ['!', '路径', '说明', '转至', '?', '错误', '警告', '时间'];

/* ---------- task card ---------- */

const OptionHead = styled.h2`
  flex: none;
  height: 26px;
  padding-left: 5px;
  border-bottom: 1px solid #6c6c6c;
  background: linear-gradient(#fafafa, #dadada);
  font-size: 15px;
  font-weight: 700;
  line-height: 24px;
`;
const SectionHead = styled.h3<{ $open?: boolean }>`
  flex: none;
  display: flex;
  height: ${(p) => (p.$open ? 23 : 22)}px;
  margin-top: ${(p) => (p.$open ? 27 : 0)}px;
  border-top: 2px solid #8b8b8b;
  border-bottom: 1px solid #8b8b8b;
  background: linear-gradient(#efefef, #d2d2d2);
  font-size: 15px;
  font-weight: 700;
  line-height: 20px;
`;
const SectionToggle = styled.button`
  flex: 0 0 21px;
  margin-right: 4px;
  border: 0;
  border-right: 1px solid #777;
  background: none;
  color: #000;
  display: flex;
  align-items: center;
  justify-content: center;
`;
const Form = styled.form`
  flex: 1;
  min-height: 0;
  overflow: hidden;
  padding: 16px 0 0 12px;
`;
const FieldLabel = styled.label<{ $top?: number }>`
  display: block;
  height: 20px;
  margin-top: ${(p) => p.$top || 0}px;
  padding-left: 2px;
  line-height: 20px;
`;
const TextField = styled.input`
  display: block;
  width: 180px;
  height: 18px;
  border: 1px solid #777;
  background: #fff;
`;
const Options = styled.div<{ $top: number }>`
  display: flex;
  flex-direction: column;
  margin-top: ${(p) => p.$top}px;
`;
const OptionLabel = styled.label<{ $muted?: boolean }>`
  display: flex;
  align-items: center;
  gap: 4px;
  height: 24px;
  color: ${(p) => (p.$muted ? '#8f8f8f' : '#111')};
`;
const Radio = styled.input.attrs({ type: 'radio' })`
  appearance: none;
  flex: none;
  width: 15px;
  height: 15px;
  border: 1px solid #555;
  border-radius: 50%;
  background: linear-gradient(#f4f4f4, #dadada);
  &:disabled { border-color: #b0b0b0; }
  &:disabled:checked { background: radial-gradient(circle, #a5a5a5 2px, #ececec 3px); }
  &:checked:enabled { border-color: #35506a; background: radial-gradient(circle, #0e2c55 2px, #4fb5e4 4px, #c5e8f6); }
`;
const PushButton = styled.button<{ $muted?: boolean; $top: number }>`
  display: block;
  width: 88px;
  height: 20px;
  margin-top: ${(p) => p.$top}px;
  border: 1px solid #888;
  background: linear-gradient(#f8f8f8, #dcdcdc);
  color: ${(p) => (p.$muted ? '#8f8f8f' : '#111')};
  line-height: 18px;
`;

/* ---------- portal bar and task bar ---------- */

const PortalBar = styled.footer`
  flex: none;
  position: relative;
  display: flex;
  align-items: flex-end;
  gap: 3px;
  height: 25px;
  background: #1a1a1a;
  color: #fff;
  white-space: nowrap;
`;
const PortalLink = styled.a`
  display: flex;
  flex: 0 0 105px;
  overflow: hidden;
  color: #fff;
  font-size: 15px;
  font-weight: 500;
  line-height: 20px;
  text-decoration: none;
`;
const EditorTab = styled.button<{ $active?: boolean }>`
  display: flex;
  align-items: center;
  gap: 4px;
  width: 113px;
  height: 20px;
  padding: 0 3px;
  border: 0;
  background: ${(p) => (p.$active ? '#fff' : '#c1c1c1')};
  color: #111;
  font-size: ${(p) => (p.$active ? 14 : 13)}px;
  font-weight: ${(p) => (p.$active ? 700 : 400)};
`;
const DockButton = styled.button`
  display: flex;
  align-items: center;
  justify-content: center;
  width: 20px;
  height: 20px;
  border: 0;
  background: #cfcfcf;
`;
const Status = styled.div`
  display: flex;
  align-items: center;
  gap: 4px;
  width: 115px;
  height: 23px;
  margin: 0 140px 0 3px;
  padding-left: 4px;
  border-left: 1px solid #555;
  font-size: 13px;
  overflow: hidden;
`;
const ImeBar = styled.div`
  position: absolute;
  right: 0;
  top: 0;
  display: flex;
  align-items: center;
  gap: 8px;
  width: 140px;
  height: 25px;
  padding-left: 22px;
  background: #fff;
  color: #1a73c8;
  font-size: 15px;
  font-weight: 700;
`;
const ImeLogo = styled.svg`
  position: absolute;
  left: -16px;
  top: -6px;
`;
const TaskBar = styled.footer`
  flex: none;
  position: relative;
  display: flex;
  height: 40px;
  background: linear-gradient(90deg, #1d2529 27%, #2e2629 42%, #30272a 55%, #1d2836 72%, #1b2028);
  color: #fff;
  white-space: nowrap;
`;
const TaskSearch = styled.label`
  flex: 0 0 324px;
  display: flex;
  align-items: center;
  background: #f0f0f0;
  color: #444;
  overflow: hidden;
`;
const Lens = styled.svg`
  flex: none;
  margin-left: -4px;
`;
const TaskInput = styled.input`
  flex: 1;
  margin-left: 10px;
  border: 0;
  outline: 0;
  background: none;
  font-size: 14px;
  &::placeholder { color: #444; opacity: 1; }
`;
const TaskButton = styled.button<{ $state?: string }>`
  display: flex;
  align-items: center;
  justify-content: center;
  width: 49px;
  border: 0;
  border-bottom: 2px solid ${(p) => (p.$state ? '#a8c8ee' : 'transparent')};
  background: ${(p) => (p.$state === 'active' ? '#635b60' : 'none')};
`;
const TiaLogo = styled.span`
  display: flex;
  flex-direction: column;
  width: 26px;
  height: 24px;
  background: #2b3550;
  color: #fff;
  font-size: 12px;
  font-weight: 700;
  line-height: 12px;
  text-align: left;
`;
const TiaVersion = styled.span`
  color: #a9b4dc;
`;
const Tray = styled.div`
  display: flex;
  align-items: center;
  gap: 8px;
  padding-right: 96px;
  font-size: 13px;
`;
const Clock = styled.div`
  position: absolute;
  right: 0;
  top: 1px;
  width: 28px;
  overflow: hidden;
  font-size: 12px;
  line-height: 19px;
`;
const Timer = styled.div`
  position: absolute;
  right: 24px;
  top: -4px;
  width: 50px;
  height: 50px;
  border: 2px solid #8cc0f4;
  border-radius: 50%;
  background: linear-gradient(#3f86e6, #6fb2f5);
  font-size: 14px;
  line-height: 46px;
  text-align: center;
`;
const TrayLogo = styled.svg`
  position: absolute;
  right: 66px;
  top: 12px;
`;

const SLogo = () => (
  <>
    <path d="M2 5l23-5 6 24-23 6z" fill="#e9531d" />
    <path d="M25 7C18 4 9 6 10 11c1 5 13 2 14 7 1 5-9 7-15 4" fill="none" stroke="#fff" strokeWidth="4" />
  </>
);

const MainTools = () => (
  <Toolbar>
    <TextButton $lead><Icon name="save" />保存项目</TextButton>
    <ToolButton aria-label="打印"><Icon name="print" /></ToolButton>
    <Sep />
    {['cut', 'copy', 'paste', 'remove'].map((n) => <ToolButton key={n} aria-label={n}><Icon name={n} /></ToolButton>)}
    <Sep />
    <ToolButton aria-label="撤销"><Icon name="undo" /></ToolButton>
    <ToolButton $narrow aria-label="撤销列表"><Icon name="caret" /></ToolButton>
    <ToolButton aria-label="重做"><Icon name="redo" /></ToolButton>
    <ToolButton $narrow $muted aria-label="重做列表"><Icon name="caret" /></ToolButton>
    <Sep />
    {['compile', 'download', 'upload', 'simulate', 'runtime'].map((n) => (
      <ToolButton key={n} aria-label={n}><Icon name={n} /></ToolButton>
    ))}
    <Sep />
    <TextButton><Icon name="online" />转至在线</TextButton>
    <TextButton $muted><Icon name="offline" />转至离线</TextButton>
    <Sep />
    {['accessible', 'startCpu', 'stopCpu'].map((n) => <ToolButton key={n} aria-label={n}><Icon name={n} /></ToolButton>)}
    <Sep />
    <ToolButton aria-label="交叉引用"><Icon name="crossRef" /></ToolButton>
    <Sep />
    <ToolButton aria-label="水平拆分"><Icon name="splitH" /></ToolButton>
    <ToolButton aria-label="垂直拆分"><Icon name="splitV" /></ToolButton>
    <Sep />
    <Search placeholder="<在项目中搜索>" aria-label="在项目中搜索" />
    <ToolButton aria-label="查找"><Icon name="find" /></ToolButton>
  </Toolbar>
);

const ProjectTree = () => (
  <Panel $width={284}>
    <PanelHead>
      <ClippedText as="h2" $shift={48}>项目树</ClippedText>
      <Spacer />
      <HeadTools>
        <HeadButton aria-label="列"><Icon name="columns" /></HeadButton>
        <HeadButton aria-label="折叠"><Icon name="left" /></HeadButton>
      </HeadTools>
    </PanelHead>
    <TabStrip $flush>
      <Tab $active $width={20} aria-label="设备" />
    </TabStrip>
    <IconBar $right>
      <Sep />
      <FramedButton aria-label="列表视图"><Icon name="table" /></FramedButton>
      <ToolButton aria-label="导出"><Icon name="exportList" /></ToolButton>
    </IconBar>
    <TreeHeader />
    <TreeArea>
      <Tree>
        {nodes.map(([level, icon, label, tone, bold], i) => (
          <TreeRow key={i} $tone={tone}>
            <TreeName $level={level} $bold={bold} $selected={tone === 'selected'}><Icon name={icon} />{label}</TreeName>
            <TreeSide />
          </TreeRow>
        ))}
      </Tree>
      <ScrollColumn>
        <ScrollButton aria-label="向上滚动"><Icon name="chevU" size={14} /></ScrollButton>
        <Thumb $vertical><Grip $vertical /></Thumb>
        <Spacer />
        <ScrollButton aria-label="向下滚动"><Icon name="chevD" size={14} /></ScrollButton>
      </ScrollColumn>
    </TreeArea>
    <DetailHead><ClippedText as="h2" $shift={24}>详细视图</ClippedText></DetailHead>
  </Panel>
);

const TagGrid = () => (
  <Grid>
    <colgroup>
      {widths.map((w, i) => <col key={i} width={w} />)}
      <col />
    </colgroup>
    <thead>
      <tr>{headings.map((h, i) => <Th key={i} $active={i === 2}>{h}</Th>)}</tr>
    </thead>
    <tbody>
      <tr>
        <Td $kind="num">1</Td>
        <Td><Icon name="tag" size={15} /></Td>
        <Td $kind="name">按钮</Td>
        <Td>Bool</Td>
        <Td>%I0.0</Td>
        <Td $kind="shade"><Check disabled $inset={5} aria-label="保持" /></Td>
        {flags.map((f) => <Td key={f}><Check $blue defaultChecked $inset={14} aria-label={f} /></Td>)}
        <Td />
      </tr>
      <tr>
        <Td $kind="numActive">2</Td>
        <Td />
        <Td $kind="edit"><NameInput aria-label="名称" /></Td>
        <Td $kind="pick"><CellEnd><PickButton aria-label="选择数据类型"><Icon name="list" size={14} /></PickButton></CellEnd></Td>
        <Td />
        <Td $kind="shade"><Check disabled $inset={5} aria-label="保持" /></Td>
        {flags.map((f) => <Td key={f} $kind="shade"><Check defaultChecked $inset={14} aria-label={f} /></Td>)}
        <Td />
      </tr>
      {Array.from({ length: 8 }, (_, r) => (
        <tr key={r}>
          <Td $kind="num" />
          {headings.slice(1).map((_h, c) => <Td key={c} $kind={c === 1 ? 'name' : undefined} />)}
        </tr>
      ))}
    </tbody>
  </Grid>
);

const words = ['指导', '知道', '制度', '制定', '指定'];

const TagEditor = () => (
  <>
    <PanelHead $dark>
      <Crumb>项目4</Crumb><Icon name="crumb" />
      <Crumb $model>PLC_1 [CPU 1214C DC/DC/DC]</Crumb><Icon name="crumb" />
      <Crumb>PLC 变量</Crumb><Icon name="crumb" />
      <Crumb>默认变量表 [29]</Crumb>
      <Spacer />
      <HeadTools>
        {['min', 'restore', 'max', 'close'].map((n) => (
          <HeadButton key={n} aria-label={n}><Icon name={n} size={15} /></HeadButton>
        ))}
      </HeadTools>
    </PanelHead>
    <TabStrip $right>
      <Tab $active $width={73}><Icon name="tag" /><TabText>变量</TabText></Tab>
      <Tab $width={105}><Icon name="constant" /><TabText>用户常量</TabText></Tab>
      <Tab $width={105}><Icon name="sysConstant" /><TabText>系统常量</TabText></Tab>
    </TabStrip>
    <IconBar>
      {['addRow', 'insertRow'].map((n) => <ToolButton key={n} aria-label={n}><Icon name={n} /></ToolButton>)}
      <Sep />
      {['exportPage', 'importPage'].map((n) => <ToolButton key={n} aria-label={n}><Icon name={n} /></ToolButton>)}
      <Sep />
      {['monitor', 'wrench'].map((n) => <ToolButton key={n} aria-label={n}><Icon name={n} /></ToolButton>)}
      <Spacer />
      <HeadTools $end={8}><ToolButton aria-label="布局"><Icon name="layout" /></ToolButton></HeadTools>
    </IconBar>
    <Editor>
      <TableTitle>默认变量表</TableTitle>
      <TableView $height={194}><TagGrid /></TableView>
      <HScroll inset={39} gap={11} />
      <Caret />
      <Ime>
        <ImeMark width="34" height="34" viewBox="0 0 34 34" aria-hidden="true">
          <path d="M2 8c8-4 18-3 30-7-2 6-10 7-18 7" fill="#f9d3c4" />
          <path d="M12 9c8-1 18 1 18 8 0 7-12 11-24 10" fill="none" stroke="#fdeee8" strokeWidth="6" />
        </ImeMark>
        <ImeTop><Typed>zhi'd</Typed><span>9 打开输入工具箱</span></ImeTop>
        <Candidates>
          {words.map((w, i) => (
            <Candidate key={w} $first={i === 0}><Num>{i + 1}</Num>{w}</Candidate>
          ))}
          <Pager><Faint><Icon name="thinL" size={15} /></Faint><Icon name="thinR" size={15} /><Icon name="thinD" /></Pager>
        </Candidates>
      </Ime>
      <Pointer width="14" height="22" viewBox="0 0 14 22" aria-hidden="true">
        <path d="M1 1v15l3.500-3 2.500 6 2.500-1-2.500-6H12z" fill="#fff" stroke="#222" />
      </Pointer>
    </Editor>
  </>
);

const InspectorPane = () => (
  <Inspector>
    <InspectorHead>
      <Spacer />
      <Tab $width={75}><Icon name="property" /><TabText>属性</TabText></Tab>
      <Tab $active $width={81}><Icon name="infoTab" /><TabText>信息</TabText><Spacer /><Icon name="infoYellow" size={14} /></Tab>
      <Tab $width={75}><Icon name="diagnose" /><TabText>诊断</TabText></Tab>
      <InspectorTools>
        <HeadButton aria-label="浮动"><Icon name="restore" size={14} /></HeadButton>
        <HeadButton aria-label="还原"><Icon name="rows" size={14} /></HeadButton>
        <HeadButton aria-label="折叠"><Icon name="down" size={14} /></HeadButton>
      </InspectorTools>
    </InspectorHead>
    <TabStrip>
      <Tab $width={71}><TabText $pad={8}>常规</TabText><Spacer /><Icon name="infoYellow" size={14} /></Tab>
      <Tab $width={95}><TabText $pad={8}>交叉引用</TabText></Tab>
      <Tab $active $width={63}><TabText $pad={8}>编译</TabText></Tab>
    </TabStrip>
    <FilterBar>
      <FramedButton aria-label="错误"><Icon name="error" /></FramedButton>
      <FramedButton aria-label="警告"><Icon name="warning" /></FramedButton>
      <FramedButton aria-label="信息"><Icon name="message" /></FramedButton>
      <SelectBox>
        <Select aria-label="消息筛选"><option>显示所有消息</option></Select>
      </SelectBox>
    </FilterBar>
    <TableView>
      <Grid>
        <colgroup>
          {logWidths.map((w, i) => <col key={i} width={w} />)}
          <col />
        </colgroup>
        <thead><tr>{logHeads.map((h) => <Th key={h}>{h}</Th>)}</tr></thead>
        <tbody>
          {Array.from({ length: 10 }, (_, r) => <tr key={r}><Td colSpan={8} /></tr>)}
        </tbody>
      </Grid>
    </TableView>
    <HScroll gap={8} />
  </Inspector>
);

const TaskCard = () => (
  <Panel $width={70}>
    <PanelHead>
      任务<Spacer /><Icon name="pane" size={8} />
    </PanelHead>
    <OptionHead>选项</OptionHead>
    <SectionHead $open><SectionToggle aria-label="折叠"><Icon name="chevD" /></SectionToggle>查找和替换</SectionHead>
    <Form>
      <FieldLabel htmlFor="find">查找：</FieldLabel>
      <TextField id="find" />
      <Options $top={7}>
        {['全字匹配', '区分大小写', '在子结构中查找', '在隐藏文本中查找', '使用通配符', '使用正则表达式'].map((t, i) => (
          <OptionLabel key={t} $muted={i !== 1}><Check disabled={i !== 1} />{t}</OptionLabel>
        ))}
      </Options>
      <Options $top={7}>
        <OptionLabel><Radio name="direction" defaultChecked />向下</OptionLabel>
        <OptionLabel><Radio name="direction" />向上</OptionLabel>
      </Options>
      <PushButton type="button" $top={2} aria-label="查找" />
      <FieldLabel htmlFor="replace" $top={17}>替换为：</FieldLabel>
      <TextField id="replace" />
      <Options $top={6}>
        <OptionLabel $muted><Radio name="scope" disabled defaultChecked />整个文档</OptionLabel>
        <OptionLabel $muted><Radio name="scope" disabled />从当前位置开始</OptionLabel>
        <OptionLabel $muted><Radio name="scope" disabled />选择</OptionLabel>
      </Options>
      <PushButton type="button" $muted $top={3}>替换</PushButton>
    </Form>
    <ScrollRow>
      <ScrollButton aria-label="向左滚动"><Icon name="chevL" size={14} /></ScrollButton>
      <Thumb $gap={3}><Grip /></Thumb>
    </ScrollRow>
    <SectionHead><SectionToggle aria-label="展开"><Icon name="chevR" /></SectionToggle>语言和资源</SectionHead>
  </Panel>
);

const menus = ['编辑(E)', '视图(V)', '插入(I)', '在线(O)', '选项(N)', '工具(T)', '窗口(W)', '帮助(H)'];

export default function App() {
  return (
    <Shell>
      <Global />
      <TitleBar><ClippedText $shift={46}>Siemens  -  E:\PLC工程\项目4\项目4</ClippedText></TitleBar>
      <CommandArea>
        <div>
          <MenuBar>{menus.map((m) => <MenuItem key={m}>{m}</MenuItem>)}</MenuBar>
          <MainTools />
        </div>
        <Brand>Totally Integrated Automation<BrandSub>PORTAL</BrandSub></Brand>
      </CommandArea>
      <Workspace>
        <ProjectTree />
        <Panel>
          <TagEditor />
          <InspectorPane />
        </Panel>
        <TaskCard />
      </Workspace>
      <PortalBar>
        <PortalLink href="#portal"><ClippedText as="span" $shift={23}>Portal 视图</ClippedText></PortalLink>
        <EditorTab><Icon name="overview" />总览</EditorTab>
        <EditorTab><Icon name="network" />PLC_1</EditorTab>
        <EditorTab $active><Icon name="tagTable" />默认变量表</EditorTab>
        <Spacer />
        <DockButton aria-label="停靠"><Icon name="dock" /></DockButton>
        <Status><Icon name="ok" size={14} />已创建项目 项目4。</Status>
        <ImeBar>
          <ImeLogo width="32" height="32" viewBox="0 0 32 32" aria-hidden="true"><SLogo /></ImeLogo>
          <span>中</span>
          <Icon name="punct" /><Icon name="smile" /><Icon name="mic" /><Icon name="keyboard" />
        </ImeBar>
      </PortalBar>
      <TaskBar>
        <TaskSearch>
          <Lens width="14" height="14" viewBox="0 0 14 14" aria-hidden="true">
            <circle cx="7" cy="6" r="4.500" fill="none" stroke="#444" strokeWidth="1.300" />
          </Lens>
          <TaskInput placeholder="在这里输入你要搜索的内容" aria-label="搜索" />
        </TaskSearch>
        <TaskButton aria-label="Cortana"><Icon name="cortana" size={17} /></TaskButton>
        <TaskButton aria-label="任务视图"><Icon name="taskView" /></TaskButton>
        <TaskButton aria-label="Edge">
          <svg width="25" height="25" viewBox="0 0 25 25" aria-hidden="true">
            <circle cx="12.500" cy="12.500" r="12" fill="#1679c8" />
            <path d="M1 11C2 4 8 .5 13 .5c7 0 11.500 5 11.500 10 0 4-3 6-6 6-2 0-4-1-3.500-2 2-3-1-6-4-6-5 0-9 4-10 6z" fill="#35c1b0" />
            <path d="M18 2c4 2 6.500 5 6.500 8.500 0 4-3 6-6 6-2 0-4-1-3.500-2 4-2 5-7 3-12.500z" fill="#5fd66a" />
            <path d="M9 10c-3 4 0 11 9 11 2 0 4-1 4-1-3 4-7 5-11 4-6-2-6-11-2-14z" fill="#0c4f9e" />
          </svg>
        </TaskButton>
        <TaskButton $state="open" aria-label="文件资源管理器">
          <svg width="22" height="19" viewBox="0 0 22 19" aria-hidden="true">
            <path d="M0 1h8l2 2h12v15H0z" fill="#e3a92a" />
            <path d="M0 5h22v13H0z" fill="#fbd765" />
            <path d="M4 18v-7h14v7h-4v-4H8v4z" fill="#3f93cf" />
          </svg>
        </TaskButton>
        <TaskButton $state="active" aria-label="TIA V15"><TiaLogo>TIA<TiaVersion>V15</TiaVersion></TiaLogo></TaskButton>
        <Spacer />
        <Tray>
          <Icon name="thinU" /><Icon name="bookmark" /><Icon name="battery" /><Icon name="globe" /><Icon name="speaker" size={17} />
          <span>中</span>
        </Tray>
        <TrayLogo width="16" height="16" viewBox="0 0 32 32" aria-hidden="true"><SLogo /></TrayLogo>
        <Clock>9:14<br />2/3/28</Clock>
        <Timer>03:49</Timer>
      </TaskBar>
    </Shell>
  );
}
